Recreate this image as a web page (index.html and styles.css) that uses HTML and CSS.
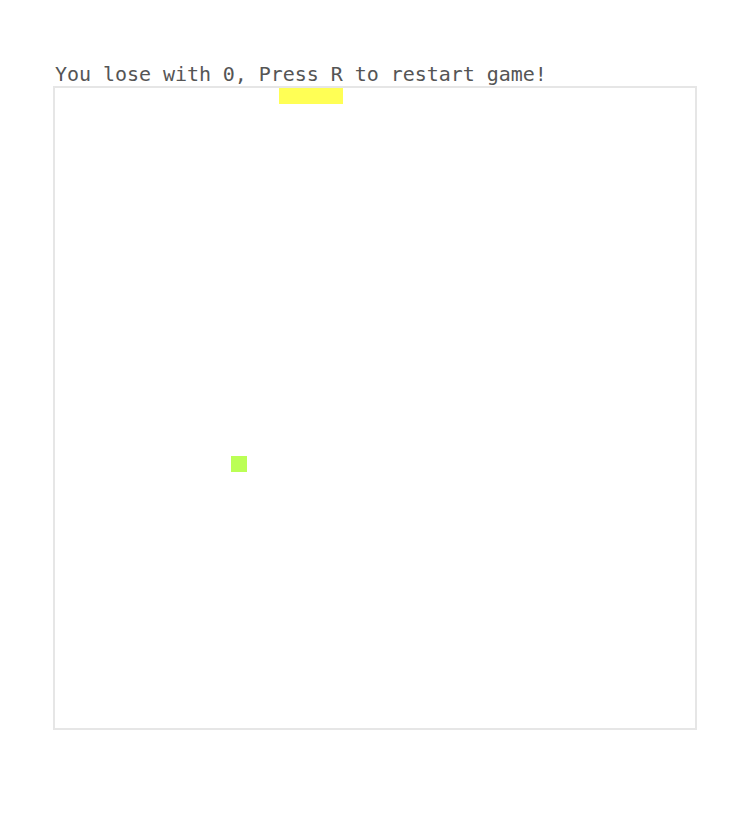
FILE: index.html
```html
<!DOCTYPE html>
<html>
<head>
<meta charset="utf-8">
<link rel="stylesheet" href="styles.css">
</head>
<body>
<main class="game">
  <p class="status">You lose with 0, Press R to restart game!</p>
  <div class="board">
    <div class="paddle"></div>
    <div class="ball"></div>
  </div>
</main>
</body>
</html>
```
FILE: styles.css
```css
html, body {
  margin: 0;
  padding: 0;
  background: #ffffff;
}
.game {
  width: 644px;
  margin: 0 auto;
  padding-top: 62px;
}
.status {
  margin: 0;
  padding-left: 2px;
  font-family: "DejaVu Sans Mono", "Liberation Mono", monospace;
  font-size: 20px;
  line-height: 24px;
  color: #555555;
  letter-spacing: -0.05px;
}
.board {
  position: relative;
  width: 640px;
  height: 640px;
  border: 2px solid #e6e6e6;
}
.paddle {
  position: absolute;
  left: 224px;
  top: 0;
  width: 64px;
  height: 16px;
  background: #ffff55;
}
.ball {
  position: absolute;
  left: 176px;
  top: 368px;
  width: 16px;
  height: 16px;
  background: #bbff55;
}
```
